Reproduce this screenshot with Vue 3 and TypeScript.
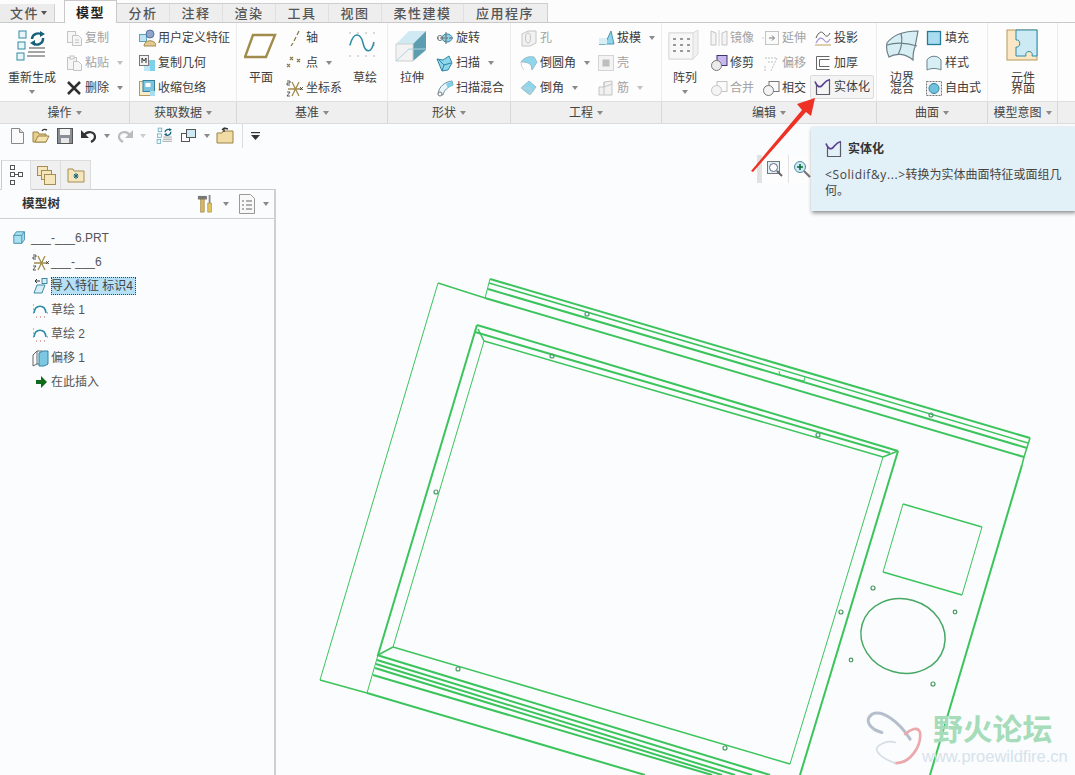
<script setup lang="ts">
interface Item { icon: string; text: string; off?: boolean; caret?: boolean; hot?: boolean }
interface Big { big: true; icon: string; lines: string[]; caret?: boolean; box?: number }
type Col = Big | { big?: false; rows: Item[] }
interface Group { key: string; label: string; cols: Col[] }

const tabs = ["分析", "注释", "渲染", "工具", "视图", "柔性建模", "应用程序"];

// inner markup of each icon, small ones are 18x18, big ones 34x34
const icons: Record<string, string> = {
  regen: `<g fill="#eaf5fa" stroke="#2e8ba3"><rect x="4" y="2" width="7" height="7"/><rect x="3" y="13" width="7" height="7"/><rect x="2" y="24" width="7" height="7"/></g><path d="M17 10a6 6 0 0 1 10-4M28 9a6 6 0 0 1-10 5" fill="none" stroke="#17607a" stroke-width="2.4"/><path d="M25 2l5 3-5 3zM20 17l-5-3 5-3z" fill="#17607a"/><path d="M14 19h16M13 23h17M12 27h18" stroke="#888" stroke-width="1.4"/>`,
  copy: `<g fill="#f6f6f6" stroke="#c4c4c4"><rect x="2.5" y="2.5" width="8" height="11"/><path d="M7.5 6.5h6l3 3v7h-9z"/></g><path d="M10 11h4M10 13.500h4" stroke="#c4c4c4"/>`,
  paste: `<g fill="#f6f6f6" stroke="#c4c4c4"><rect x="2.500" y="3.500" width="9" height="12"/><rect x="5" y="2" width="4" height="3"/><path d="M8.500 7.500h5l3 3v6h-8z"/></g>`,
  del: `<path d="M3 3l12 12M15 3L3 15" stroke="#2f2f2f" stroke-width="2.500"/>`,
  udf: `<rect x="1.500" y="5.500" width="7" height="7" fill="#bfe3f1" stroke="#5aa3bf"/><circle cx="12" cy="5" r="4" fill="#8fa6c9" stroke="#55719e"/><path d="M6 17c0-7 12-7 12 0z" fill="#e3c98f" stroke="#a58d55"/>`,
  copygeo: `<rect x="1.500" y="1.500" width="9" height="10" fill="#f2f2f2" stroke="#777"/><path d="M4 9V4l2 3 2-3v5" stroke="#333" fill="none"/><rect x="11" y="6" width="6" height="11" fill="#7fd0ea"/><rect x="6" y="12" width="6" height="5" fill="#bfe6f3"/>`,
  shrink: `<rect x="1.500" y="2.500" width="14" height="14" fill="#f7ecd0" stroke="#b59a58"/><rect x="5" y="1.500" width="11.500" height="11" fill="#7cc3dd" stroke="#37809c"/><rect x="7.500" y="4" width="5" height="4" fill="#fff"/><rect x="12" y="12" width="5" height="5" fill="#a6def0"/>`,
  axis: `<path d="M13 2l-2 4M10 8l-2 4M7 14l-2 3" stroke="#8a7a4a" stroke-width="1.300"/>`,
  point: `<g stroke="#8a7a4a" stroke-width="1.200" fill="none"><path d="M4 3l3 3M7 3L4 6M11 5l3 3M14 5l-3 3M1 10l3 3M4 10l-3 3"/></g>`,
  csys: `<path d="M6 3l7 14M13 3L6 17M2 10h14" stroke="#a18c4e" stroke-width="1.300"/><path d="M1 2h3v2H1v2h3M1 13h3l-3 4h3M14 8l3 3M17 8l-3 3" stroke="#333" stroke-width=".8" fill="none"/>`,
  plane: `<path d="M9 6h22L22 28H1z" fill="#fff" stroke="#a18c4e" stroke-width="2.400"/>`,
  sketch: `<g fill="#9a9a9a"><circle cx="2" cy="4" r=".7"/><circle cx="10" cy="4" r=".7"/><circle cx="18" cy="4" r=".7"/><circle cx="26" cy="4" r=".7"/><circle cx="2" cy="16" r=".7"/><circle cx="26" cy="16" r=".7"/><circle cx="2" cy="27" r=".7"/><circle cx="10" cy="27" r=".7"/><circle cx="18" cy="27" r=".7"/><circle cx="26" cy="27" r=".7"/></g><path d="M2 16c4-15 11-11 13-2s8 12 11-1" fill="none" stroke="#2a8ca6" stroke-width="1.500"/>`,
  extrude: `<path d="M1 15L14 2h17L18 15z" fill="#cfeaf3"/><path d="M18 15L31 2v19L18 32z" fill="#5c9db0"/><path d="M1 15h17v17H1z" fill="#f3f3f3" stroke="#cfcfcf"/><path d="M1 32L14 20h17" stroke="#a8d3e0" fill="none"/>`,
  revolve: `<ellipse cx="11" cy="9" rx="5" ry="4" fill="#8fd3ea" stroke="#2f86a3"/><circle cx="4" cy="9" r="2.500" fill="none" stroke="#777"/><path d="M1 9h16" stroke="#666" stroke-dasharray="2 1"/><path d="M10 3v12" stroke="#666"/>`,
  sweep: `<path d="M1 5l6 1 6-4 3 7-4 7-6 1z" fill="#8ed6ec" stroke="#2f86a3"/><path d="M3 6l5 5-2 6M8 11l7-2" stroke="#2f86a3" fill="none"/>`,
  sweepblend: `<path d="M2 15C3 7 9 3 16 2l1 4C12 8 8 11 7 16z" fill="#e8f5fa" stroke="#6a8f9c"/><path d="M10 5l6-3 1 4-5 3z" fill="#7fcfe8"/><circle cx="4" cy="15" r="2" fill="#fff" stroke="#777"/>`,
  hole: `<g fill="#f2f2f2" stroke="#c4c4c4"><path d="M2 5l6-3h8v12l-6 3H2z"/><ellipse cx="8" cy="9" rx="2.500" ry="5"/></g>`,
  round: `<path d="M1 8c3-5 9-6 13-5l3 5-5 8-1-5C8 8 4 8 1 8z" fill="#8ed6ec" stroke="#9bbcc8"/><path d="M1 8c0 3 1 6 3 8" fill="none" stroke="#cfcfcf"/>`,
  chamfer: `<path d="M1 9l8-7 7 6-6 8z" fill="#8ed6ec" stroke="#9bbcc8"/><path d="M1 9h9v7" fill="none" stroke="#cfcfcf"/>`,
  draft: `<path d="M2 15h6l6-13 3 13z" fill="#8ed6ec" stroke="#4f97b0"/><path d="M2 9h8v6H2z" fill="#d8eff6"/>`,
  shell: `<rect x="1.500" y="1.500" width="15" height="15" fill="#f3f3f3" stroke="#d4d4d4"/><rect x="5.500" y="5.500" width="7" height="7" fill="#bdbdbd"/>`,
  rib: `<g fill="#f1f1f1" stroke="#c4c4c4"><path d="M2 8h5V3l8-1v14H2z"/><path d="M7 8l8-3M7 3v13"/></g>`,
  pattern: `<path d="M1 4h24l5-3v24l-5 5H1z" fill="#f1f1f1" stroke="#dadada"/><rect x="1" y="4" width="24" height="26" fill="#f8f8f8" stroke="#dadada"/><g fill="#9a9a9a"><rect x="5" y="9" width="3" height="2"/><rect x="12" y="9" width="3" height="2"/><rect x="19" y="9" width="3" height="2"/><rect x="5" y="15" width="3" height="2"/><rect x="12" y="15" width="3" height="2"/><rect x="19" y="15" width="3" height="2"/><rect x="5" y="21" width="3" height="2"/><rect x="12" y="21" width="3" height="2"/><rect x="19" y="21" width="3" height="2"/></g>`,
  mirror: `<g fill="#f4f4f4" stroke="#c4c4c4"><path d="M1 2l5 2v12H1zM17 2l-5 2v12h5z"/></g><path d="M9 1v16" stroke="#d0d0d0"/>`,
  extend: `<rect x="3.500" y="2.500" width="13" height="13" fill="#fafafa" stroke="#c4c4c4"/><path d="M0 9h2" stroke="#ccc"/><path d="M7 9h5M10 6.500L12.500 9 10 11.500" fill="none" stroke="#777"/>`,
  trim: `<rect x="7" y="1.500" width="10" height="10" fill="#c9b8ef" stroke="#3f3566"/><circle cx="6.500" cy="11.500" r="5" fill="#ececec" stroke="#777"/>`,
  offset: `<path d="M3 4h12L9 17M6 8h6M3 12v5" fill="none" stroke="#c0c0c0" stroke-dasharray="2 1"/>`,
  merge: `<rect x="7" y="2.500" width="10" height="10" fill="#fafafa" stroke="#c4c4c4"/><circle cx="6.500" cy="11.500" r="5" fill="#f4f4f4" stroke="#c4c4c4"/>`,
  intersect: `<rect x="7" y="2.500" width="10" height="10" fill="#fafafa" stroke="#777"/><circle cx="6.500" cy="11.500" r="5" fill="#f4f4f4" stroke="#777"/>`,
  project: `<path d="M2 9c3-7 6-7 8-4s4 3 6-1" fill="none" stroke="#555"/><path d="M2 14c3-6 6-6 8-3s4 3 6-1" fill="none" stroke="#a897d8" stroke-width="1.200"/><path d="M1 16h16" stroke="#bda25e"/>`,
  thicken: `<path d="M2.500 2.500h13M2.500 2.500v13h13M5.500 5.500h10M5.500 5.500v7h10" fill="none" stroke="#666"/>`,
  solidify: `<path d="M2.500 7v9.500h13V2" fill="none" stroke="#5a5a6a" stroke-width="1.200"/><path d="M1 3.500c1.500 4 4 6.500 6.500 4.500S11 2.500 16 1.500" fill="none" stroke="#5c3f92" stroke-width="1.700"/>`,
  boundary: `<path d="M2 14C8 6 20 2 33 2l-3 16c-2 4-2 8-2 13C20 24 10 24 4 28 2 24 1 19 2 14z" fill="#d7eef5" stroke="#6c7f86" stroke-width="1.200"/><path d="M16 4c2 8 0 16-3 22M2 16c10-3 20-2 30 1" fill="none" stroke="#6c7f86" stroke-width="1.200"/>`,
  fill: `<rect x="2.500" y="2.500" width="13" height="13" fill="#a9dcee" stroke="#237b99" stroke-width="1.300"/>`,
  style: `<path d="M2 16V6c3-5 11-5 14 0v10c-4-2-10-2-14 0z" fill="#d7eef5" stroke="#66838c"/>`,
  freestyle: `<rect x="1.500" y="2.500" width="15" height="14" fill="#f4f4f4" stroke="#777" stroke-dasharray="2 1"/><circle cx="9" cy="9.500" r="5" fill="#6fc1dc" stroke="#2f86a3"/>`,
  component: `<rect x="1" y="1" width="30" height="30" fill="#fbe6c6" stroke="#b59a58"/><path d="M10 1h21v26h-5c2-6-8-6-6 0h-10V18c5 1 5-8 0-7z" fill="#cdeaf4" stroke="#2a8ca6"/>`,
};

const groups: Group[] = [
  { key: "ops", label: "操作", cols: [
    { big: true, icon: "regen", lines: ["重新生成"], caret: true },
    { rows: [
      { icon: "copy", text: "复制", off: true },
      { icon: "paste", text: "粘贴", off: true, caret: true },
      { icon: "del", text: "删除", caret: true },
    ] },
  ] },
  { key: "get", label: "获取数据", cols: [
    { rows: [
      { icon: "udf", text: "用户定义特征" },
      { icon: "copygeo", text: "复制几何" },
      { icon: "shrink", text: "收缩包络" },
    ] },
  ] },
  { key: "datum", label: "基准", cols: [
    { big: true, icon: "plane", lines: ["平面"] },
    { rows: [
      { icon: "axis", text: "轴" },
      { icon: "point", text: "点", caret: true },
      { icon: "csys", text: "坐标系" },
    ] },
    { big: true, icon: "sketch", lines: ["草绘"] },
  ] },
  { key: "shape", label: "形状", cols: [
    { big: true, icon: "extrude", lines: ["拉伸"] },
    { rows: [
      { icon: "revolve", text: "旋转" },
      { icon: "sweep", text: "扫描", caret: true },
      { icon: "sweepblend", text: "扫描混合" },
    ] },
  ] },
  { key: "eng", label: "工程", cols: [
    { rows: [
      { icon: "hole", text: "孔", off: true },
      { icon: "round", text: "倒圆角", caret: true },
      { icon: "chamfer", text: "倒角", caret: true },
    ] },
    { rows: [
      { icon: "draft", text: "拔模", caret: true },
      { icon: "shell", text: "壳", off: true },
      { icon: "rib", text: "筋", off: true, caret: true },
    ] },
  ] },
  { key: "edit", label: "编辑", cols: [
    { big: true, icon: "pattern", lines: ["阵列"], caret: true },
    { rows: [
      { icon: "mirror", text: "镜像", off: true },
      { icon: "trim", text: "修剪" },
      { icon: "merge", text: "合并", off: true },
    ] },
    { rows: [
      { icon: "extend", text: "延伸", off: true },
      { icon: "offset", text: "偏移", off: true },
      { icon: "intersect", text: "相交" },
    ] },
    { rows: [
      { icon: "project", text: "投影" },
      { icon: "thicken", text: "加厚" },
      { icon: "solidify", text: "实体化", hot: true },
    ] },
  ] },
  { key: "surf", label: "曲面", cols: [
    { big: true, icon: "boundary", lines: ["边界", "混合"] },
    { rows: [
      { icon: "fill", text: "填充" },
      { icon: "style", text: "样式" },
      { icon: "freestyle", text: "自由式" },
    ] },
  ] },
  { key: "model", label: "模型意图", cols: [
    { big: true, icon: "component", lines: ["元件", "界面"] },
  ] },
];

const treeIcons: Record<string, string> = {
  part: `<path d="M2 6l3-4h9v9l-3 4H2z" fill="#a8e0f2" stroke="#3c8aa6"/><path d="M2 6h9v9M11 6l3-4" fill="none" stroke="#3c8aa6"/>`,
  csys: icons.csys,
  imported: `<rect x="10" y="1.500" width="5" height="5" fill="#d8eef6" stroke="#3c8aa6"/><path d="M2 16l3-8h8l-3 8z" fill="#d8eef6" stroke="#3c8aa6"/><path d="M8 4H3M3 4l2-2M3 4l2 2" fill="none" stroke="#333"/>`,
  sketch: `<path d="M2 12c1-9 11-9 12 0" fill="none" stroke="#2a8ca6" stroke-width="1.600"/><path d="M1 4h1M1 8h1M1 12h1M4 16h1M8 16h1M12 16h1M15 12h1" stroke="#c06060"/>`,
  offset: `<path d="M1 6l4-4v13l-4 2zM5 2h5v13H5" fill="none" stroke="#666"/><path d="M7 4l4-2h5v13l-4 2H7z" fill="#7cc8e2" stroke="#2f86a3"/>`,
  insert: `<path d="M4 7h5V3l6 6-6 6v-4H4z" fill="#0f6a1a"/>`,
};

const tree = [
  { icon: "csys", text: "___-___6" },
  { icon: "imported", text: "导入特征 标识4", selected: true },
  { icon: "sketch", text: "草绘 1" },
  { icon: "sketch", text: "草绘 2" },
  { icon: "offset", text: "偏移 1" },
  { icon: "insert", text: "在此插入" },
];

// model edges in page coordinates, heavier strokes are the doubled ones
const heavy = [
  "490,279 1030,438", "485,298 1024,457", "477,325 898,451", "475,332 890,453",
  "477,325 378,655", "898,451 800,775", "1022,465 930,775", "488,289 1027,448",
  "377,655 770,775", "377,660 752,775", "376,664 735,775", "375,668 722,775",
  "373,675 712,775", "367,693 645,775",
];
const medium = [
  "484,341 883,457", "393,647 790,764", "489,283 1028,443", "320,680 367,693",
  "438,283 485,298", "903,504 982,527", "883,572 962,595", "393,647 378,655",
  "1030,438 1024,457 1022,465", "478,329 484,341", "883,457 898,451",
];
const thin = [
  "438,283 320,680", "490,279 485,298", "484,341 393,647", "883,457 790,764",
  "378,655 367,693", "903,504 883,572", "982,527 962,595",
];
const holes = [
  [587, 314, 2], [552, 356, 2], [458, 669, 2], [725, 748, 2], [436, 492, 2],
  [818, 435, 2], [931, 415, 2], [841, 612, 2], [873, 588, 2], [955, 612, 1.8],
  [933, 684, 2], [851, 660, 1.8],
];
</script>

<template>
  <div class="app">
    <nav class="tabs">
      <div class="tab file">文件<i class="caret"></i></div>
      <div class="tab active">模型</div>
      <div class="tab-strip">
        <div v-for="t in tabs" :key="t" class="tab">{{ t }}</div>
      </div>
    </nav>

    <section class="ribbon">
      <div class="ribbon-grid body">
        <div v-for="g in groups" :key="g.key" class="group" :class="'g-' + g.key">
          <template v-for="(c, i) in g.cols" :key="i">
            <div v-if="c.big" class="big">
              <svg class="big-icon" viewBox="0 0 34 34" v-html="icons[c.icon]"></svg>
              <span v-for="l in c.lines" :key="l" class="big-label">{{ l }}</span>
              <i v-if="c.caret" class="caret big-caret"></i>
            </div>
            <div v-else class="rows">
              <div
                v-for="r in c.rows"
                :key="r.text"
                class="row"
                :class="{ off: r.off, hot: r.hot }"
              >
                <svg class="small-icon" viewBox="0 0 18 18" v-html="icons[r.icon]"></svg>
                <span>{{ r.text }}</span>
                <i v-if="r.caret" class="caret"></i>
              </div>
            </div>
          </template>
        </div>
        <div></div>
      </div>
      <div class="ribbon-grid foot">
        <div v-for="g in groups" :key="g.key" class="foot-cell">{{ g.label }}<i class="caret"></i></div>
        <div></div>
      </div>
    </section>

    <div class="qat">
      <svg class="q" viewBox="0 0 18 18"><path d="M3.500 1.500h8l4 4v11h-12z" fill="#fafafa" stroke="#888" /><path d="M11.500 1.500v4h4" fill="#ddd" stroke="#888" /></svg>
      <svg class="q" viewBox="0 0 18 18"><path d="M1 15V5h5l1 2h7v8z" fill="#e8cf8e" stroke="#9a8244" /><path d="M3 15l3-6h11l-3 6z" fill="#f5e3b0" stroke="#9a8244" /><path d="M10 4c1-2 3-2 5-1" fill="none" stroke="#333" stroke-width="1.400" /></svg>
      <svg class="q" viewBox="0 0 18 18"><rect x="1.500" y="1.500" width="15" height="15" fill="#8a8f96" stroke="#555" /><rect x="4" y="2" width="10" height="6" fill="#f4f4f4" /><rect x="5" y="11" width="8" height="5" fill="#e8e8e8" /></svg>
      <svg class="q" viewBox="0 0 18 18"><path d="M4 8c4-5 11-3 11 2 0 3-2 4-4 5" fill="none" stroke="#333" stroke-width="2.200" /><path d="M1 3v8h8z" fill="#333" /></svg>
      <i class="caret q-caret"></i>
      <svg class="q" viewBox="0 0 18 18"><path d="M14 8C10 3 3 5 3 10c0 3 2 4 4 5" fill="none" stroke="#bbb" stroke-width="2.200" /><path d="M17 3v8H9z" fill="#bbb" /></svg>
      <i class="caret q-caret light"></i>
      <svg class="q" viewBox="0 0 34 34" v-html="icons.regen"></svg>
      <svg class="q" viewBox="0 0 18 18"><g fill="#fff" stroke="#555"><rect x="1.500" y="6.500" width="8" height="8" /><rect x="6.500" y="2.500" width="9" height="8" fill="#cdeaf4" /></g></svg>
      <i class="caret q-caret"></i>
      <svg class="q" viewBox="0 0 18 18"><path d="M1 16V6h5l1-2h10v12z" fill="#f0dca4" stroke="#9a8244" /><path d="M8 5V1M8 1L6 3M8 1l4 1" fill="none" stroke="#333" stroke-width="1.300" /></svg>
      <span class="q-sep"></span>
      <svg class="q-more" viewBox="0 0 9 8" width="9" height="8"><path d="M0 .5h9" stroke="#333" stroke-width="1.400" /><path d="M0 3h9L4.500 8z" fill="#333" /></svg>
    </div>

    <main class="main">
      <aside class="panel">
        <div class="panel-tabs">
          <div class="ptab active">
            <svg viewBox="0 0 16 22" width="16" height="22"><g fill="#fff" stroke="#555"><rect x="2.500" y="1.500" width="4" height="4" /><rect x="2.500" y="8.500" width="4" height="4" /><rect x="2.500" y="16.500" width="4" height="4" /><rect x="10.500" y="8.500" width="4" height="4" /></g><path d="M6.500 10.500h4" stroke="#555" /></svg>
          </div>
          <div class="ptab">
            <svg viewBox="0 0 22 22" width="22" height="22"><g fill="#f6e6bb" stroke="#a58d55"><rect x="2.500" y="2.500" width="10" height="9" /><rect x="6.500" y="6.500" width="10" height="9" /><rect x="9.500" y="10.500" width="11" height="10" /></g></svg>
          </div>
          <div class="ptab">
            <svg viewBox="0 0 18 16" width="18" height="16"><path d="M1 2h5l1 2h10v11H1z" fill="#f6e6bb" stroke="#a58d55" /><path d="M9 6v6M6.500 9h5M7 7l4 4M11 7l-4 4" stroke="#17607a" /></svg>
          </div>
        </div>
        <div class="panel-head">
          <span class="panel-title">模型树</span>
          <svg class="hd-tool" viewBox="0 0 20 22" width="18" height="20"><path d="M1 2h10v4H1z" fill="#777" /><rect x="4" y="6" width="4" height="14" fill="#d7b45f" stroke="#927a38" stroke-width=".6" /><rect x="13" y="1" width="2" height="9" fill="#888" /><rect x="12" y="10" width="4" height="10" fill="#e0c25f" stroke="#927a38" stroke-width=".6" /></svg>
          <i class="caret"></i>
          <svg class="hd-list" viewBox="0 0 16 20" width="16" height="20"><path d="M.5.500h11l4 4v15H.5z" fill="#f8f8f8" stroke="#999" /><path d="M3 7h2M7 7h6M3 11h2M7 11h6M3 15h2M7 15h6" stroke="#666" /></svg>
          <i class="caret"></i>
        </div>
        <ul class="tree">
          <li class="root">
            <svg viewBox="0 0 18 18" width="16" height="16" v-html="treeIcons.part"></svg>
            <span class="root-name">___-___6.PRT</span>
          </li>
          <li v-for="n in tree" :key="n.text">
            <svg viewBox="0 0 18 18" width="18" height="18" v-html="treeIcons[n.icon]"></svg>
            <span :class="{ selected: n.selected }">{{ n.text }}</span>
          </li>
        </ul>
      </aside>

      <div class="canvas">
        <svg class="model" viewBox="276 148 799 627" width="799" height="627">
          <g fill="none" stroke="#3cc45c">
            <polyline v-for="p in heavy" :key="p" :points="p" stroke-width="2" />
            <polyline v-for="p in medium" :key="p" :points="p" stroke-width="1.500" />
            <polyline v-for="p in thin" :key="p" :points="p" stroke-width="1" />
            <ellipse cx="903" cy="636" rx="42.500" ry="37" transform="rotate(16 903 636)" stroke="#46a862" stroke-width="1.500" />
            <path d="M779 371l1 4 24 6 1-4" stroke-width="1" />
            <circle v-for="h in holes" :key="h[0]" :cx="h[0]" :cy="h[1]" :r="h[2]" stroke="#4a9a64" stroke-width="1.200" />
          </g>
        </svg>
      </div>
    </main>

    <!-- things floating over the graphics window -->
    <div class="mini-bar">
      <div class="mini-cell">
        <svg viewBox="0 0 18 18" width="18" height="18"><rect x="1.500" y="1.500" width="12" height="12" fill="#dff0f7" stroke="#777" /><circle cx="7.500" cy="7.500" r="4" fill="#fff" stroke="#668" /><path d="M11 11l5 5" stroke="#666" stroke-width="2" /></svg>
      </div>
      <div class="mini-cell">
        <svg viewBox="0 0 18 18" width="18" height="18"><circle cx="7" cy="7" r="5.500" fill="#cdeaf4" stroke="#4d8ca3" /><path d="M4 7h6M7 4v6" stroke="#0f6a3a" stroke-width="1.600" /><path d="M11 11l6 6" stroke="#777" stroke-width="2.200" /></svg>
      </div>
    </div>

    <svg class="arrow" viewBox="745 92 76 84" width="76" height="84">
      <path d="M751 171L802 110 797 104 815 98 811 116 806 112 753 172z" fill="#ee3124" />
    </svg>

    <div class="tooltip">
      <div class="tip-title">
        <svg viewBox="0 0 18 18" width="18" height="18" v-html="icons.solidify"></svg>
        <b>实体化</b>
      </div>
      <p><span class="latin">&lt;Solidif&amp;y...&gt;</span>转换为实体曲面特征或面组几何。</p>
    </div>

    <div class="watermark">
      <svg class="butterfly" viewBox="60 50 200 190" width="67" height="63">
        <g fill="none" stroke-linecap="round">
          <path d="M125 130C90 120 70 95 95 75 125 60 175 95 210 150" stroke="#b5bfcc" stroke-width="9" />
          <path d="M165 222C210 225 245 170 240 130 235 110 210 120 195 135" stroke="#eba9ab" stroke-width="8" />
          <path d="M165 222C130 210 95 185 115 170 130 160 150 155 165 160" stroke="#d5dee6" stroke-width="5" />
        </g>
      </svg>
      <div class="wm-text">
        <span class="wm-cn">野火论坛</span>
        <span class="wm-en">www.proewildfire.cn</span>
      </div>
    </div>
  </div>
</template>

<style scoped>
.app {
  position: relative;
  width: 1075px;
  height: 775px;
  overflow: hidden;
  display: flex;
  flex-direction: column;
  background: #fbfcfe;
  color: #3c3c3c;
  font: 12px/1 "Liberation Sans", "Noto Sans CJK SC", sans-serif;
}

.caret {
  display: inline-block;
  flex: none;
  width: 0;
  height: 0;
  margin-left: 6px;
  border-left: 3.5px solid transparent;
  border-right: 3.5px solid transparent;
  border-top: 4px solid #8a8a8a;
  vertical-align: middle;
}

/* tabs */
.tabs {
  height: 23px;
  box-sizing: border-box;
  flex: none;
  display: flex;
  align-items: flex-end;
  border-bottom: 1px solid #c9c9c9;
  background: #fcfcfc;
}
.tab {
  height: 18px;
  padding: 0 12px;
  display: flex;
  align-items: center;
  font-size: 13px;
  font-weight: 500;
  letter-spacing: 1.500px;
  color: #555;
}
.tab.file {
  width: 55px;
  box-sizing: border-box;
  padding: 0 0 0 10px;
  background: #ececec;
  border-right: 1px solid #d0d0d0;
  margin-right: 9px;
}
.tab.file .caret { margin-left: 2px; border-top-color: #555; }
.tab.active {
  width: 53px;
  box-sizing: border-box;
  height: 23px;
  margin-bottom: -1px;
  padding: 0;
  justify-content: center;
  background: #fdfdfd;
  border: 1px solid #c9c9c9;
  border-bottom: none;
  color: #222;
  font-weight: 700;
}
.tab-strip {
  display: flex;
  width: 430px;
  background: #eeeeee;
  border-top: 1px solid #cfcfcf;
  border-right: 1px solid #cfcfcf;
}
.tab-strip .tab { border-right: 1px solid #e0e0e0; width: 53px; box-sizing: border-box; justify-content: center; padding: 0; flex: none; }
.tab-strip .tab:nth-child(n + 6) { width: 82px; }
.tab-strip .tab:last-child { border-right: none; }

/* ribbon */
.ribbon { flex: none; }
.ribbon-grid {
  display: grid;
  grid-template-columns: 130px 107px 151px 123px 151px 215px 111px 70px 1fr;
}
.body { height: 78px; background: #fdfdfd; }
.group {
  display: grid;
  grid-auto-flow: column;
  justify-content: start;
  box-sizing: border-box;
  border-right: 1px solid #ececec;
  height: 78px;
}
.g-ops { padding-left: 8px; grid-template-columns: 57px auto; }
.g-get { padding-left: 8px; }
.g-datum { padding-left: 7px; grid-template-columns: 42px 62px 34px; }
.g-shape { padding-left: 7px; grid-template-columns: 41px auto; }
.g-eng { padding-left: 9px; grid-template-columns: 77px auto; }
.g-edit { padding-left: 6px; grid-template-columns: 42px 52px 52px auto; }
.g-surf { padding-left: 8px; grid-template-columns: 40px auto; }
.g-model { padding-left: 18px; }

.big {
  width: fit-content;
  min-width: 30px;
  display: flex;
  flex-direction: column;
  align-items: center;
}
.big-icon { width: 34px; height: 34px; margin-top: 6px; margin-bottom: 10px; flex: none; }
.big-label { font-size: 12px; line-height: 11px; white-space: nowrap; }
.big-caret { margin: 6px 0 0; }

.rows { display: flex; flex-direction: column; padding-top: 2px; }
.row {
  height: 25px;
  display: flex;
  align-items: center;
  white-space: nowrap;
  box-sizing: border-box;
}
.row .caret { margin-left: 8px; }
.row.off { color: #a2a2a2; }
.row.off .caret { border-top-color: #c0c0c0; }
.small-icon { width: 18px; height: 18px; margin-right: 2px; flex: none; }
.row.hot {
  width: 64px;
  height: 24px;
  margin-left: -4px;
  padding-left: 3px;
  background: #f4f4f4;
  border: 1px solid #dcdcdc;
  border-radius: 2px;
}

.foot {
  height: 23px;
  box-sizing: border-box;
  background: #efefef;
  border-top: 1px solid #dfdfdf;
  border-bottom: 1px solid #dcdcdc;
}
.foot-cell {
  display: flex;
  align-items: center;
  justify-content: center;
  border-right: 1px solid #d8d8d8;
  color: #444;
}
.foot-cell .caret { margin-left: 4px; }

/* quick access */
.qat {
  height: 24px;
  flex: none;
  display: flex;
  align-items: center;
  padding-left: 8px;
}
.q { width: 18px; height: 18px; margin-right: 6px; flex: none; }
.q-caret { margin: 0 6px 0 0; }
.q-caret.light { border-top-color: #ccc; margin-right: 10px; }
.q-sep { width: 1px; height: 24px; background: #ddd; margin-left: 2px; }
.q-more { margin-left: 8px; }

/* model tree panel */
.main { flex: 1; display: flex; min-height: 0; }
.panel {
  width: 276px;
  flex: none;
  box-sizing: border-box;
  padding-top: 12px;
  display: flex;
  flex-direction: column;
}
.panel-tabs { display: flex; height: 30px; padding-left: 1px; flex: none; margin-bottom: -1px; position: relative; z-index: 1; }
.ptab {
  width: 30px;
  box-sizing: border-box;
  display: flex;
  align-items: center;
  justify-content: center;
  background: #f0f0f0;
  border: 1px solid #dcdcdc;
  border-bottom: 1px solid #c9c9c9;
  border-left: none;
}
.ptab.active { background: #fbfcfe; border-left: 1px solid #c9c9c9; border-bottom-color: #fbfcfe; }
.panel-head {
  height: 28px;
  flex: none;
  display: flex;
  align-items: center;
  border-top: 1px solid #c9c9c9;
  border-bottom: 1px solid #cfcfcf;
  border-right: 2px solid #cfcfcf;
  padding-left: 22px;
}
.panel-title { font-weight: 700; font-size: 12.500px; letter-spacing: .3px; color: #333; flex: 1; }
.hd-list { margin-left: 5px; }
.panel-head .caret { margin-left: 8px; margin-right: 5px; }

.tree {
  list-style: none;
  margin: 0;
  padding: 7px 0 0 32px;
  flex: 1;
  border-right: 2px solid #cfcfcf;
  color: #555;
}
.tree li { height: 24px; display: flex; align-items: center; gap: 1px; }
.tree li.root { margin-left: -20px; gap: 3px; }
.tree li span { padding: 2px 0; }
.root-name { color: #555; }
.selected {
  background: #b5e0f6;
  outline: 1px dotted #444;
  outline-offset: -1px;
  padding: 3px 0 !important;
  width: 85px;
  color: #444;
  white-space: nowrap;
}

.canvas { flex: 1; position: relative; overflow: hidden; }
.model { position: absolute; left: 0; top: 0; }

/* overlays */
.mini-bar {
  position: absolute;
  left: 757px;
  top: 155px;
  height: 28px;
  display: flex;
  border-left: 5px solid #e2e2e2;
  background: #fdfdfd;
}
.mini-cell {
  width: 26px;
  display: flex;
  align-items: center;
  justify-content: center;
  border-right: 1px solid #e2e2e2;
}
.arrow { position: absolute; left: 745px; top: 92px; }
.tooltip {
  position: absolute;
  left: 811px;
  top: 127px;
  width: 264px;
  height: 84px;
  box-sizing: border-box;
  padding: 13px 8px 0 14px;
  background: #e2f0f8;
  box-shadow: 1px 2px 4px rgba(0, 0, 0, 0.45);
  color: #444;
}
.tip-title { display: flex; align-items: center; gap: 5px; color: #333; }
.tip-title b { font-size: 12px; }
.tooltip p { margin: 9px 0 0; line-height: 16px; }
.latin { font-family: "Open Sans", sans-serif; letter-spacing: .6px; }

.watermark {
  position: absolute;
  left: 860px;
  top: 706px;
  width: 210px;
  display: flex;
}
.butterfly { flex: none; }
.wm-text { display: flex; flex-direction: column; margin-left: -5px; }
.wm-cn {
  margin: 4px 0 0 11px;
  font: 700 29.800px/34px "Noto Sans CJK SC", sans-serif;
  color: #a6dcb9;
  white-space: nowrap;
}
.wm-en {
  margin-top: 3px;
  font: 16.500px/18px "Liberation Sans", sans-serif;
  color: #d5e3ec;
  white-space: nowrap;
}
</style>

<style>
html, body { background: #fbfcfe; }
</style>
